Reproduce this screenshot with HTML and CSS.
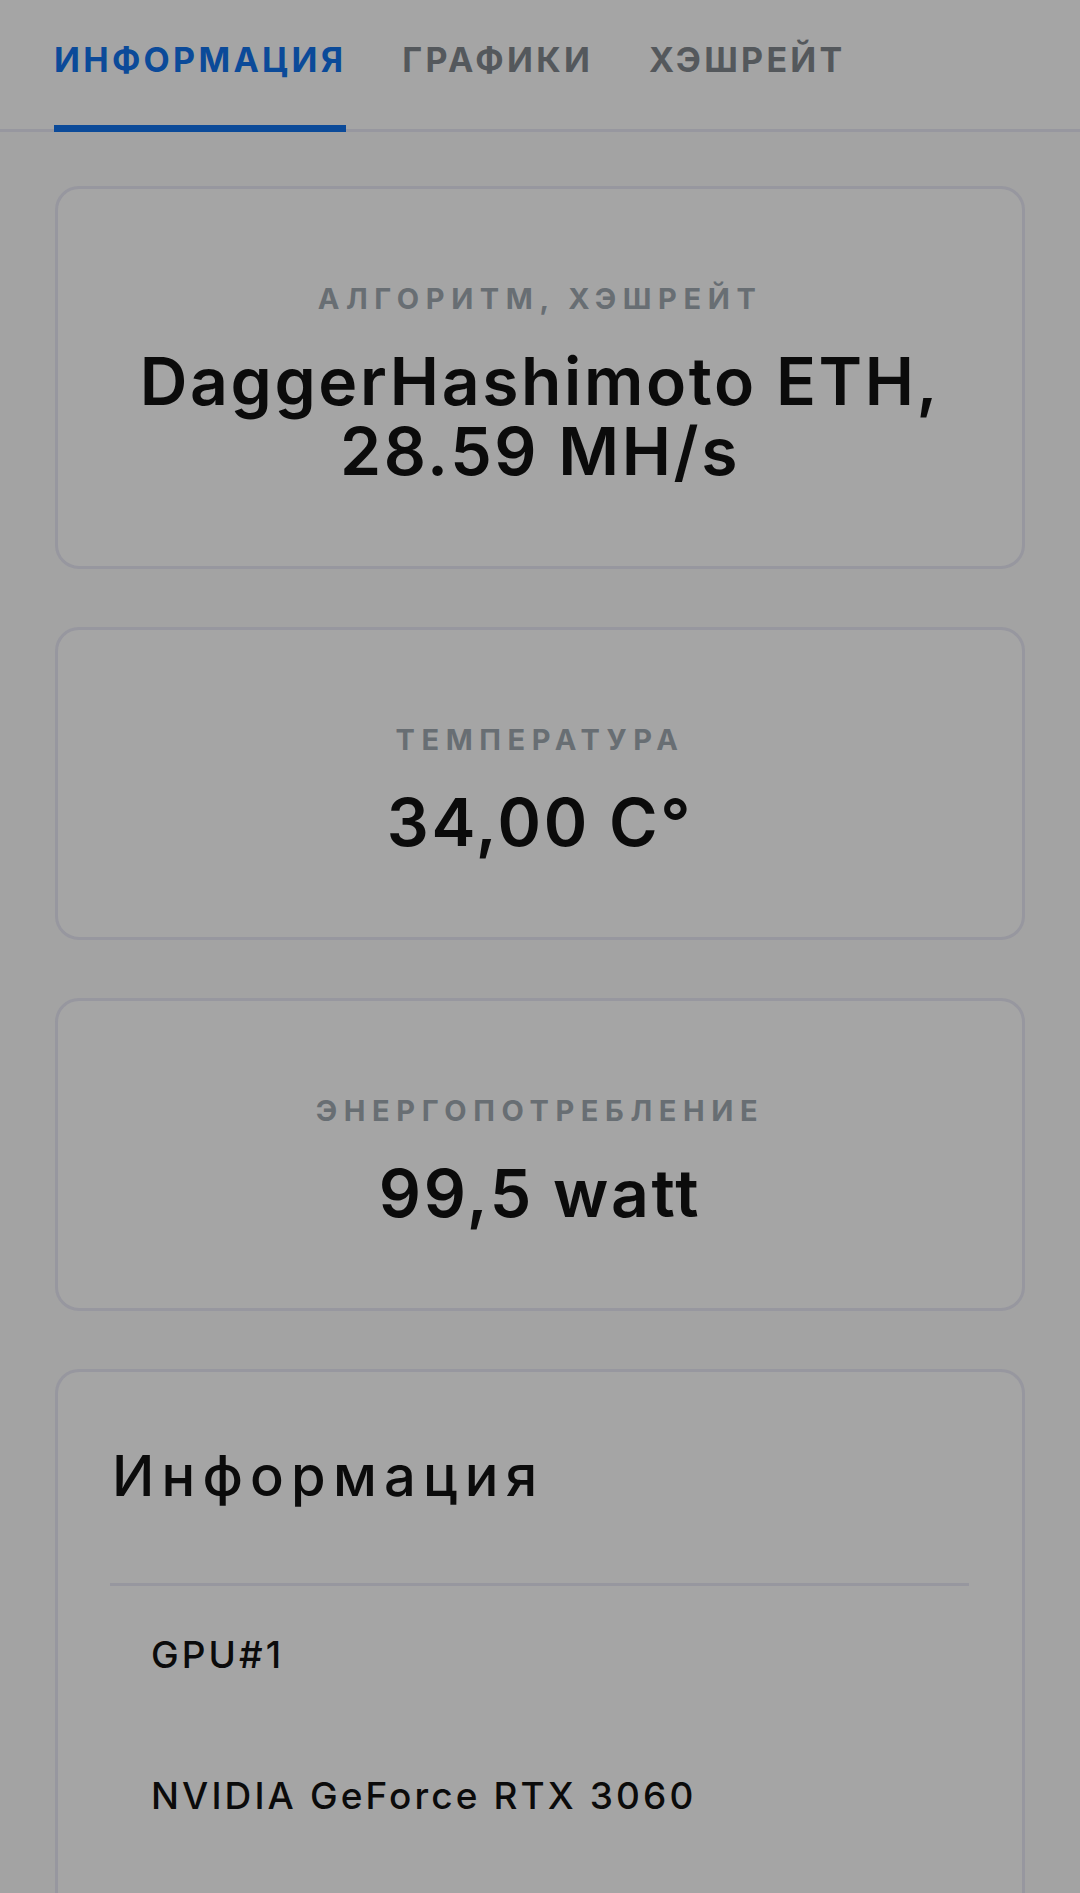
FILE: index.html
```html
<!DOCTYPE html>
<html lang="ru">
<head>
<meta charset="utf-8">
<title>Информация</title>
<link rel="stylesheet" href="styles.css">
</head>
<body>
<nav class="tabs">
  <div class="tab tab-active">ИНФОРМАЦИЯ</div>
  <div class="tab">ГРАФИКИ</div>
  <div class="tab">ХЭШРЕЙТ</div>
</nav>
<main class="content">
  <section class="stat">
    <div class="stat-label">АЛГОРИТМ, ХЭШРЕЙТ</div>
    <div class="stat-value"><span class="value-line">DaggerHashimoto ETH,</span><span class="value-line">28.59 MH/s</span></div>
  </section>
  <section class="stat">
    <div class="stat-label">ТЕМПЕРАТУРА</div>
    <div class="stat-value"><span class="value-line">34,00 C°</span></div>
  </section>
  <section class="stat">
    <div class="stat-label">ЭНЕРГОПОТРЕБЛЕНИЕ</div>
    <div class="stat-value"><span class="value-line">99,5 watt</span></div>
  </section>
  <section class="info">
    <h2 class="info-title">Информация</h2>
    <div class="info-divider"></div>
    <div class="info-row">GPU#1</div>
    <div class="info-row">NVIDIA GeForce RTX 3060</div>
    <div class="info-row">&nbsp;</div>
  </section>
</main>
</body>
</html>
```

FILE: styles.css
```css
html, body {
  margin: 0;
  padding: 0;
}
body {
  background: #a3a3a3;
  font-family: Inter, "Noto Sans", "DejaVu Sans", sans-serif;
  color: #0b0b0b;
  overflow: hidden;
  height: 1893px;
}
.tabs {
  display: flex;
  gap: 56px;
  padding-left: 54px;
  height: 129px;
  background: #a5a5a5;
  border-bottom: 3px solid #97979f;
}
.tab {
  position: relative;
  box-sizing: border-box;
  height: 129px;
  padding-top: 38px;
  line-height: 44px;
  font-size: 34px;
  font-weight: 700;
  letter-spacing: 3.3px;
  color: #54585c;
}
.tab-active {
  color: #0b4a99;
}
.tab-active::after {
  content: "";
  position: absolute;
  left: 0;
  right: 0;
  bottom: -3px;
  height: 7px;
  background: #0b4a99;
}
.content {
  padding: 54px 55px 0;
  display: flex;
  flex-direction: column;
  gap: 58px;
}
.stat {
  border: 3px solid #97979f;
  border-radius: 24px;
  background: #a5a5a5;
  padding: 93px 20px 80px;
  text-align: center;
}
.stat-label {
  font-size: 29px;
  line-height: 34px;
  font-weight: 700;
  letter-spacing: 6.6px;
  color: #686e73;
}
.stat-value {
  margin-top: 30px;
  font-size: 66px;
  font-weight: 600;
  letter-spacing: 2.6px;
  color: #0b0b0b;
}
.value-line {
  display: block;
  height: 70px;
  line-height: 70px;
}
.info {
  border: 3px solid #97979f;
  border-bottom: none;
  border-radius: 24px 24px 0 0;
  background: #a5a5a5;
  padding: 70px 53px 0 52px;
}
.info-title {
  margin: 0 0 73px;
  padding-left: 2px;
  font-size: 56px;
  line-height: 68px;
  font-weight: 500;
  letter-spacing: 7.2px;
}
.info-divider {
  height: 3px;
  background: #97979f;
}
.info-row {
  padding: 43px 0 46px 41px;
  font-size: 37px;
  line-height: 52px;
  font-weight: 500;
  letter-spacing: 3.1px;
}
```
